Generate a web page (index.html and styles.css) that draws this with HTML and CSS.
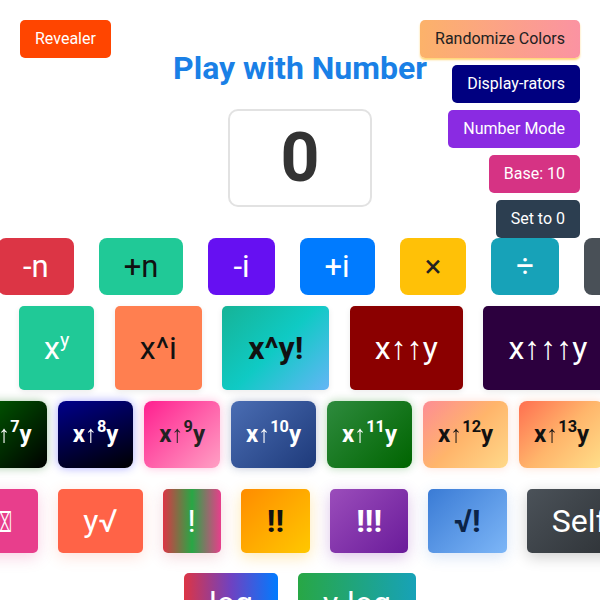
FILE: index.html
```html
<!DOCTYPE html>
<html lang="en">
<head>
<meta charset="utf-8">
<title>Play with Number</title>
<link rel="stylesheet" href="styles.css">
</head>
<body>
<button class="ctl revealer">Revealer</button>
<div class="panel">
  <button class="ctl randomize">Randomize Colors</button>
  <button class="ctl navy">Display-rators</button>
  <button class="ctl violet">Number Mode</button>
  <button class="ctl base">Base: 10</button>
  <button class="ctl setzero">Set to 0</button>
</div>
<main class="page">
  <h1 class="title">Play with Number</h1>
  <div class="display">0</div>

  <div class="row r1">
    <button class="b c-red">-n</button>
    <button class="b c-teal">+n</button>
    <button class="b c-indigo">-i</button>
    <button class="b c-blue">+i</button>
    <button class="b c-yellow">×</button>
    <button class="b c-info">÷</button>
    <button class="b c-grey">%</button>
  </div>

  <div class="row r2">
    <button class="b c-green">x<span class="sup">y</span></button>
    <button class="b c-coral">x^i</button>
    <button class="b c-aqua bold">x^y!</button>
    <button class="b c-darkred">x↑↑y</button>
    <button class="b c-plum">x↑↑↑y</button>
  </div>

  <div class="row r3">
    <button class="b g7">x<span class="arw">↑</span><span class="sup">7</span>y</button>
    <button class="b g8">x<span class="arw">↑</span><span class="sup">8</span>y</button>
    <button class="b g9">x<span class="arw">↑</span><span class="sup">9</span>y</button>
    <button class="b g10">x<span class="arw">↑</span><span class="sup">10</span>y</button>
    <button class="b g11">x<span class="arw">↑</span><span class="sup">11</span>y</button>
    <button class="b g12">x<span class="arw">↑</span><span class="sup">12</span>y</button>
    <button class="b g13">x<span class="arw">↑</span><span class="sup">13</span>y</button>
  </div>

  <div class="row r4">
    <button class="b c-pink"><span class="tofu">⌧</span></button>
    <button class="b c-tomato">y√</button>
    <button class="b c-tri">!</button>
    <button class="b c-amber bold">!!</button>
    <button class="b c-purple bold">!!!</button>
    <button class="b c-sky bold">√!</button>
    <button class="b c-dark">Self</button>
  </div>

  <div class="row r5">
    <button class="b c-log">log</button>
    <button class="b c-ylog">y-log</button>
  </div>
</main>
</body>
</html>
```
FILE: styles.css
```css
* { box-sizing: border-box; }
html, body { margin: 0; padding: 0; overflow: hidden; background: #fff; }
body {
  width: 600px;
  height: 600px;
  font-family: Roboto, "Liberation Sans", "DejaVu Sans", sans-serif;
  position: relative;
}
button { font-family: inherit; border: none; margin: 0; cursor: pointer; white-space: nowrap; }

/* top controls */
.ctl {
  font-size: 16px;
  line-height: 18px;
  padding: 10px 15px;
  border-radius: 5px;
  color: #fff;
}
.revealer { position: absolute; top: 20px; left: 20px; background: #ff4500; }
.panel {
  position: absolute;
  top: 20px;
  right: 20px;
  z-index: 2;
  display: flex;
  flex-direction: column;
  align-items: flex-end;
  gap: 7px;
}
.randomize {
  background: linear-gradient(to right, #fcb26a, #fb93a2);
  color: #222;
  box-shadow: 0 2px 2px rgba(255, 196, 60, 0.7);
}
.navy { background: #000080; }
.violet { background: #8a2be2; }
.base { background: #d63384; }
.setzero { background: #2c3e50; }

/* heading + display */
.title {
  margin: 50px 0 21px;
  font-size: 32px;
  line-height: 37.5px;
  font-weight: 700;
  text-align: center;
  color: #1a80e6;
}
.display {
  width: 144px;
  height: 98px;
  margin: 0 auto;
  border: 2px solid #e2e2e2;
  border-radius: 10px;
  display: flex;
  align-items: center;
  justify-content: center;
  font-size: 68px;
  font-weight: 700;
  color: #333;
}

/* rows */
.row { display: flex; width: max-content; }
.b { color: #fff; font-weight: 400; }
.bold { font-weight: 700; }
.sup { font-size: 0.62em; vertical-align: 0.62em; line-height: 0; }

.r1 { margin: 31px 0 0 -2px; gap: 25px; }
.r1 .b { font-size: 31px; line-height: 37px; padding: 10px 25px; border-radius: 8px; }

.r2 { margin: 11px 0 0 19px; gap: 20.5px; }
.r2 .b { font-size: 32px; line-height: 38px; padding: 23px 25px; border-radius: 5px; box-shadow: 0 2px 6px rgba(0, 0, 0, 0.08); }
.r2 .bold { padding: 23px 26px; }

.r3 { margin: 11px 0 0 -29px; gap: 11px; }
.r3 .b { font-size: 24px; line-height: 28px; font-weight: 700; padding: 19.5px 15px; border-radius: 8px; }
.r3 .sup { font-size: 0.68em; vertical-align: 0.62em; }
.arw {
  display: inline-block;
  font-family: "Liberation Sans", sans-serif;
  color: inherit;
  transform: translateZ(0);
}

.r4 { margin: 21px 0 0 -29px; gap: 20px; }
.r4 .b { font-size: 32px; line-height: 38px; padding: 11px 25px; border-radius: 5px; }
.r4 .bold { padding: 11px 26px; }
.tofu {
  display: inline-block;
  font-family: "DejaVu Sans", sans-serif;
  font-size: 22px;
  margin: 0 -4px;
  transform: scale(0.55, 1.25);
}

.r5 { margin: 20px auto 0; gap: 20px; }
.r5 .b { font-size: 32px; line-height: 38px; padding: 11px 25px; border-radius: 5px; }

/* row 1 colours */
.c-red { background: #dc3545; }
.c-teal { background: #20c997; color: #111; }
.c-indigo { background: #6610f2; }
.c-blue { background: #007bff; }
.c-yellow { background: #ffc107; color: #222; }
.c-info { background: #17a2b8; }
.c-grey { background: #495057; }

/* row 2 colours */
.c-green { background: #20c997; }
.c-coral { background: #ff7f50; color: #111; }
.c-aqua { background: linear-gradient(135deg, #16b396 0%, #0fcac4 50%, #64b5f6 100%); color: #111; }
.c-darkred { background: #8b0000; }
.c-plum { background: #2c003e; }

/* row 3 gradients */
.g7 { background: linear-gradient(135deg, #006400, #000); box-shadow: 0 0 10px rgba(0, 100, 0, 0.35); }
.g8 { background: linear-gradient(160deg, #00008b, #000); box-shadow: 0 0 10px rgba(40, 40, 255, 0.4); }
.g9 { background: linear-gradient(135deg, #ff1f8f, #ffa0c4); color: #222; box-shadow: 0 0 10px rgba(255, 40, 140, 0.3); }
.g10 { background: linear-gradient(135deg, #4a6db3, #1e3a7a); box-shadow: 0 0 10px rgba(40, 60, 120, 0.3); }
.g11 { background: linear-gradient(135deg, #2e8b3e, #006400); box-shadow: 0 0 10px rgba(0, 120, 0, 0.3); }
.g12 { background: linear-gradient(135deg, #fd8c94 0%, #ffb56b 50%, #ffd98a 100%); color: #111; box-shadow: 0 0 10px rgba(255, 150, 120, 0.3); }
.g13 { background: linear-gradient(135deg, #ff6f50 0%, #ffb56b 50%, #ffe08a 100%); color: #111; box-shadow: 0 0 10px rgba(255, 150, 100, 0.3); }

/* row 4 colours */
.c-pink { background: #e83e8c; box-shadow: 0 4px 15px rgba(232, 62, 140, 0.25); }
.c-tomato { background: #ff6347; box-shadow: 0 4px 15px rgba(255, 99, 71, 0.2); }
.c-tri { background: linear-gradient(to right, #dc3545, #28a745, #e83e8c); box-shadow: 0 4px 15px rgba(200, 60, 80, 0.2); }
.c-amber { background: linear-gradient(135deg, #ff8c00, #ffc800); color: #111; box-shadow: 0 4px 15px rgba(255, 180, 0, 0.3); }
.c-purple { background: linear-gradient(135deg, #9b4dbb, #6a1b9a); box-shadow: 0 4px 15px rgba(140, 60, 180, 0.3); }
.c-sky { background: linear-gradient(135deg, #3a7bd5, #7db6f7); color: #0b2347; box-shadow: 0 4px 15px rgba(60, 120, 210, 0.2); }
.c-dark { background: linear-gradient(135deg, #4b5259, #2b2f33); box-shadow: 0 4px 15px rgba(0, 0, 0, 0.2); }

/* row 5 colours */
.c-log { background: linear-gradient(to right, #dc3545, #6f42c1, #007bff); }
.c-ylog { background: linear-gradient(to right, #28a745, #17a2b8); }
```
